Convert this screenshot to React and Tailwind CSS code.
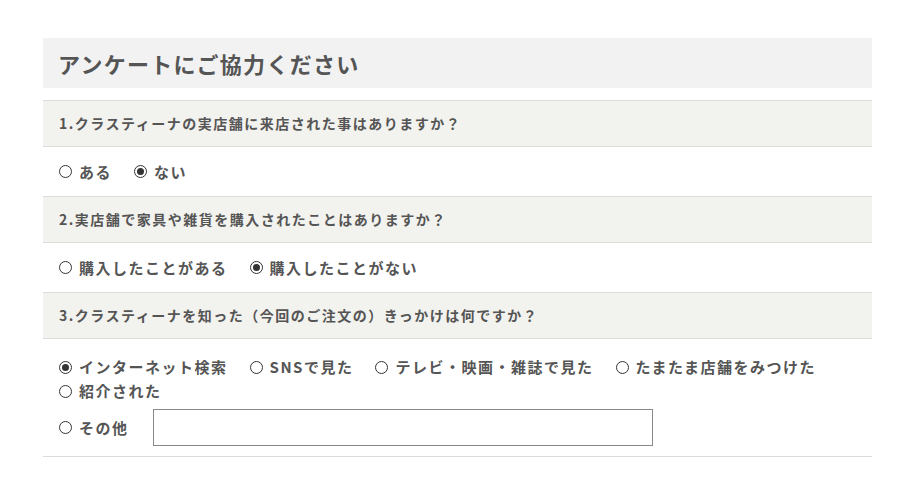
import { useState } from 'react';

const questions = [
  {
    id: 'q1',
    label: '1.クラスティーナの実店舗に来店された事はありますか？',
    options: ['ある', 'ない'],
  },
  {
    id: 'q2',
    label: '2.実店舗で家具や雑貨を購入されたことはありますか？',
    options: ['購入したことがある', '購入したことがない'],
  },
];

const q3Options = ['インターネット検索', 'SNSで見た', 'テレビ・映画・雑誌で見た', 'たまたま店舗をみつけた', '紹介された'];

function Radio({ checked, label, onClick }) {
  return (
    <label onClick={onClick} className="flex items-center gap-[7px] cursor-pointer">
      <span className="flex items-center justify-center w-[13px] h-[13px] rounded-full border border-[#333] bg-white">
        {checked && <span className="w-[7px] h-[7px] rounded-full bg-[#333]" />}
      </span>
      <span>{label}</span>
    </label>
  );
}

function QuestionHeader({ children, first }) {
  return (
    <div className={`bg-[#f2f2ee] border-b border-[#dcdcdc] px-4 py-3 text-[14px] leading-[21px] tracking-[1.5px] ${first ? 'border-t' : ''}`}>
      {children}
    </div>
  );
}

export default function App() {
  const [answers, setAnswers] = useState({ q1: 'ない', q2: '購入したことがない', q3: 'インターネット検索' });
  const [other, setOther] = useState('');

  const pick = (id, value) => setAnswers({ ...answers, [id]: value });

  return (
    <div
      className="min-h-screen bg-white pt-[38px] pl-[43px] font-bold text-[#555]"
      style={{ fontFamily: '"Noto Sans CJK JP", "Noto Sans", sans-serif' }}
    >
      <div className="w-[829px]">
        <h1 className="bg-[#f2f2f2] h-[50px] flex items-center px-[15px] text-[22px] tracking-[1.3px]">
          アンケートにご協力ください
        </h1>

        <div className="mt-3">
          {questions.map((q, i) => (
            <div key={q.id}>
              <QuestionHeader first={i === 0}>{q.label}</QuestionHeader>
              <div className="flex items-center gap-[22px] px-4 py-3 leading-[25px] text-[15px] tracking-[1.5px] border-b border-[#dcdcdc]">
                {q.options.map((o) => (
                  <Radio key={o} label={o} checked={answers[q.id] === o} onClick={() => pick(q.id, o)} />
                ))}
              </div>
            </div>
          ))}

          <QuestionHeader>3.クラスティーナを知った（今回のご注文の）きっかけは何ですか？</QuestionHeader>
          <div className="px-4 pt-4 pb-[10px] text-[15px] leading-6 tracking-[1.5px] border-b border-[#dcdcdc]">
            <div className="flex flex-wrap gap-x-[22px]">
              {q3Options.map((o) => (
                <Radio key={o} label={o} checked={answers.q3 === o} onClick={() => pick('q3', o)} />
              ))}
            </div>
            <div className="flex items-center mt-[6px]">
              <div className="w-[94px]">
                <Radio label="その他" checked={answers.q3 === 'その他'} onClick={() => pick('q3', 'その他')} />
              </div>
              <input
                value={other}
                onChange={(e) => setOther(e.target.value)}
                className="w-[500px] h-[37px] border border-[#888] px-2 outline-none"
              />
            </div>
          </div>
        </div>
      </div>
    </div>
  );
}
